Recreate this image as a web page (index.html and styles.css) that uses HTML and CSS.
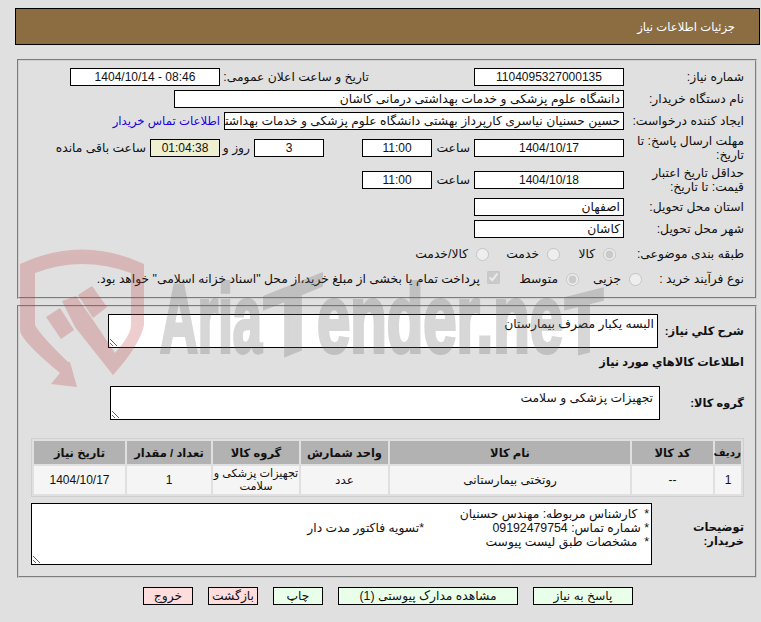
FILE: index.html
```html
<!DOCTYPE html>
<html lang="fa">
<head>
<meta charset="utf-8">
<title>جزئیات اطلاعات نیاز</title>
<link rel="stylesheet" href="styles.css">
</head>
<body>
<div class="page">
  <header class="title-bar">جزئیات اطلاعات نیاز</header>

  <section class="panel panel-top">
    <div class="row">
      <div class="label">شماره نیاز:</div>
      <div class="field center w150">1104095327000135</div>
      <div class="label announce">تاریخ و ساعت اعلان عمومی:</div>
      <div class="field center ltr w150">1404/10/14 - 08:46</div>
    </div>
    <div class="row">
      <div class="label">نام دستگاه خریدار:</div>
      <div class="field w450">دانشگاه علوم پزشکی و خدمات بهداشتی درمانی کاشان</div>
    </div>
    <div class="row">
      <div class="label">ایجاد کننده درخواست:</div>
      <div class="field w400">حسین حسنیان نیاسری کارپرداز بهشتی دانشگاه علوم پزشکی و خدمات بهداشتی درمانی کاشان</div>
      <a class="contact" href="#">اطلاعات تماس خریدار</a>
    </div>
    <div class="row tall">
      <div class="label">مهلت ارسال پاسخ: تا تاریخ:</div>
      <div class="field center w150">1404/10/17</div>
      <div class="unit hour">ساعت</div>
      <div class="field center w70">11:00</div>
      <div class="field center w70 days">3</div>
      <div class="unit daylabel">روز و</div>
      <div class="field center w70 timer">01:04:38</div>
      <div class="unit remain">ساعت باقی مانده</div>
    </div>
    <div class="row tall">
      <div class="label">حداقل تاریخ اعتبار قیمت: تا تاریخ:</div>
      <div class="field center w150">1404/10/18</div>
      <div class="unit hour">ساعت</div>
      <div class="field center w70">11:00</div>
    </div>
    <div class="row">
      <div class="label">استان محل تحویل:</div>
      <div class="field w150">اصفهان</div>
    </div>
    <div class="row">
      <div class="label">شهر محل تحویل:</div>
      <div class="field w150">کاشان</div>
    </div>
    <div class="row choices">
      <div class="label">طبقه بندی موضوعی:</div>
      <input class="radio first-a" type="radio" name="cat" checked disabled>
      <span class="opt w-kala">کالا</span>
      <input class="radio" type="radio" name="cat" disabled>
      <span class="opt w-khedmat">خدمت</span>
      <input class="radio" type="radio" name="cat" disabled>
      <span class="opt">کالا/خدمت</span>
    </div>
    <div class="row process">
      <div class="label short">نوع فرآیند خرید :</div>
      <input class="radio" type="radio" name="proc" disabled>
      <span class="opt w-jozi">جزیی</span>
      <input class="radio" type="radio" name="proc" checked disabled>
      <span class="opt w-motevaset">متوسط</span>
      <input class="check" type="checkbox" checked disabled>
      <span class="opt">پرداخت تمام یا بخشی از مبلغ خرید،از محل "اسناد خزانه اسلامی" خواهد بود.</span>
    </div>
  </section>

  <section class="panel panel-bottom">
    <div class="row block-desc">
      <div class="label bold w86">شرح کلي نياز:</div>
      <div class="area w550">البسه یکبار مصرف بیمارستان</div>
    </div>
    <div class="section-title">اطلاعات کالاهاي مورد نياز</div>
    <div class="row block-group">
      <div class="label bold w84">گروه کالا:</div>
      <div class="area group-area w550">تجهیزات پزشکی و سلامت</div>
    </div>
    <div class="table-wrap">
      <table class="items">
        <colgroup>
          <col class="c1"><col class="c2"><col class="c3"><col class="c4"><col class="c5"><col class="c6"><col class="c7">
        </colgroup>
        <thead>
          <tr>
            <th class="narrow">ردیف</th><th>کد کالا</th><th>نام کالا</th><th>واحد شمارش</th><th>گروه کالا</th><th>تعداد / مقدار</th><th>تاریخ نیاز</th>
          </tr>
        </thead>
        <tbody>
          <tr>
            <td>1</td><td>--</td><td>روتختی بیمارستانی</td><td>عدد</td><td class="tight">تجهیزات پزشکی و سلامت</td><td>1</td><td>1404/10/17</td>
          </tr>
        </tbody>
      </table>
    </div>
    <div class="row block-notes">
      <div class="label bold wrap w92">توضیحات خریدار:</div>
      <div class="area notes">
        <div class="line">*  کارشناس مربوطه: مهندس حسنیان</div>
        <div class="line">* شماره تماس: 09192479754 <span class="settle">*تسویه فاکتور مدت دار</span></div>
        <div class="line">*  مشخصات طبق لیست پیوست</div>
      </div>
    </div>
  </section>

  <nav class="actions">
    <button class="btn go w100" type="button">پاسخ به نیاز</button>
    <button class="btn go w180" type="button">مشاهده مدارک پیوستی (1)</button>
    <button class="btn go w50" type="button">چاپ</button>
    <button class="btn stop w50" type="button">بازگشت</button>
    <button class="btn stop w50" type="button">خروج</button>
  </nav>
</div>

<svg class="watermark" viewBox="0 0 761 622" aria-hidden="true">
  <g class="wm-red">
    <path d="M20,264 Q82,235 144,264 L144,325 Q140,345 113,375 L109,369 L115,353 Q131,335 131,325 L131,273 Q82,255 35,273 L35,325 Q40,335 68,362 L70,362 L77,387 L51,384 L60,373 Q20,340 20,330 Z"/>
    <path d="M46,317 L60,308 L74,330 L61,339 Z"/>
    <path d="M78,295 L92,286 L107,307 L93,318 Z"/>
    <path d="M62,301 L76,296 L93,320 L115,353 L113,375 L75,327 Z"/>
  </g>
  <g class="wm-gray">
    <text x="160" y="352" textLength="102" lengthAdjust="spacingAndGlyphs">Aria</text>
    <text x="264" y="352" textLength="58" lengthAdjust="spacingAndGlyphs" transform="translate(293 352) skewY(-22) translate(-293 -352)">T</text>
    <text x="317" y="352" textLength="246" lengthAdjust="spacingAndGlyphs">ender.ne</text>
    <text class="wm-end" x="565" y="352" textLength="38" lengthAdjust="spacingAndGlyphs" transform="translate(584 352) skewY(-14) translate(-584 -352)">T</text>
  </g>
</svg>
</body>
</html>
```
FILE: styles.css
```css
* { box-sizing: border-box; }
html, body { margin: 0; height: 622px; overflow: hidden; }
body {
  position: relative;
  background: #e0e0e0;
  color: #111;
  font: 12.3px/14px "Liberation Sans", "DejaVu Sans", sans-serif;
  direction: rtl;
}
.page { padding: 8px 1px 0 15px; }
.title-bar {
  height: 37px;
  padding-right: 24px;
  background: #8c6d42;
  border: 1px solid #000;
  color: #fff;
  font-size: 11.6px;
  line-height: 36px;
}
.panel { border: 2px groove #d0d0d0; margin: 0 3px 0 2px; }
.panel-top { margin-top: 14px; padding: 7px 11px 9px 0; height: 240px; }
.panel-bottom { margin-top: 6px; height: 273px; padding: 7px 11px 0 0; }
.row { display: flex; align-items: center; min-height: 18px; margin-bottom: 4px; }
.row.tall { min-height: 28px; }
.label { width: 120px; flex: none; padding-left: 4px; }
.label.announce { width: 149px; margin-right: 105px; padding-left: 0; white-space: nowrap; }
.label.short { width: 102px; }
.bold { font-weight: 700; font-size: 11.4px; white-space: nowrap; }
.wrap { white-space: normal; }
.w86 { width: 86px; }
.w84 { width: 84px; }
.w92 { width: 92px; }
.field {
  height: 18px;
  flex: none;
  padding: 0 3px;
  background: #fff;
  border: 1px solid #000;
  line-height: 16px;
  white-space: nowrap;
  overflow: hidden;
}
.center { text-align: center; font-size: 12px; }
.ltr { direction: ltr; }
.w150 { width: 150px; }
.w450 { width: 450px; }
.w400 { width: 400px; }
.w70 { width: 70px; }
.contact { margin-right: 4px; color: #2200dd; font-size: 11.7px; text-decoration: none; white-space: nowrap; }
.unit { flex: none; }
.hour { width: 42px; padding-right: 4px; }
.days { margin-right: 38px; }
.daylabel { width: 34px; padding-right: 4px; }
.timer { background: #efefd2; }
.remain { padding-right: 4px; }
.radio { width: 13px; height: 13px; margin: 0 0 0 8px; flex: none; }
.first-a { margin-right: 8px; }
.check { width: 13px; height: 13px; margin: 0 0 3px 7px; flex: none; }
.opt { flex: none; }
.w-kala { width: 35px; }
.w-khedmat { width: 50px; }
.w-jozi { width: 42px; }
.w-motevaset { width: 58px; }
.choices { min-height: 24px; }
.process { margin: 0; }
.area {
  flex: none;
  height: 34px;
  padding: 2px 3px;
  background: #fff;
  border: 1px solid #000;
  overflow: auto;
  resize: both;
}
.w550 { width: 550px; }
.group-area { padding: 4px 6px; }
.block-desc { margin-bottom: 7px; }
.section-title { font-weight: 700; font-size: 11.4px; height: 14px; margin-bottom: 17px; }
.block-group { margin-bottom: 18px; }
.table-wrap { width: 713px; border: 1px solid #cfcfcf; }
.items { width: 711px; table-layout: fixed; border-collapse: separate; border-spacing: 2px; }
.c1 { width: 26px; } .c2 { width: 81px; } .c3 { width: 240px; } .c4 { width: 87px; }
.c5 { width: 86px; } .c6 { width: 84px; } .c7 { width: 91px; }
.items th { height: 23px; padding: 0; background: #b2b2b2; font-weight: 700; font-size: 11.5px; }
.items th.narrow { font-size: 10.4px; }
.items td { height: 28px; padding: 0 1px; background: #f5f5f5; font-size: 12px; line-height: 13px; text-align: center; }
.items td.tight { padding: 0; font-size: 11.2px; }
.block-notes { margin-top: 6px; margin-bottom: 0; }
.notes { width: 621px; height: 62px; padding: 3px 2px 0; line-height: 14px; }
.line { white-space: pre-wrap; }
.settle { margin-right: 65px; }
.actions { display: flex; gap: 15px; padding: 9px 127px 0 0; }
.btn {
  height: 18px;
  padding: 0;
  border: 1px solid #000;
  color: #111;
  font: inherit;
  line-height: 16px;
  overflow: visible;
  flex: none;
}
.go { background: #eaffea; }
.stop { background: #ffdddd; }
.w100 { width: 100px; }
.w180 { width: 180px; }
.w50 { width: 50px; }
.watermark { position: absolute; left: 0; top: 0; width: 761px; height: 622px; pointer-events: none; }
.wm-red { fill: #bc3c3c; opacity: .25; }
.wm-gray { fill: #646464; opacity: .26; stroke: #646464; stroke-width: 4; font: 700 96px "Liberation Sans", sans-serif; direction: ltr; }
.wm-end { font-size: 84px; }
```
